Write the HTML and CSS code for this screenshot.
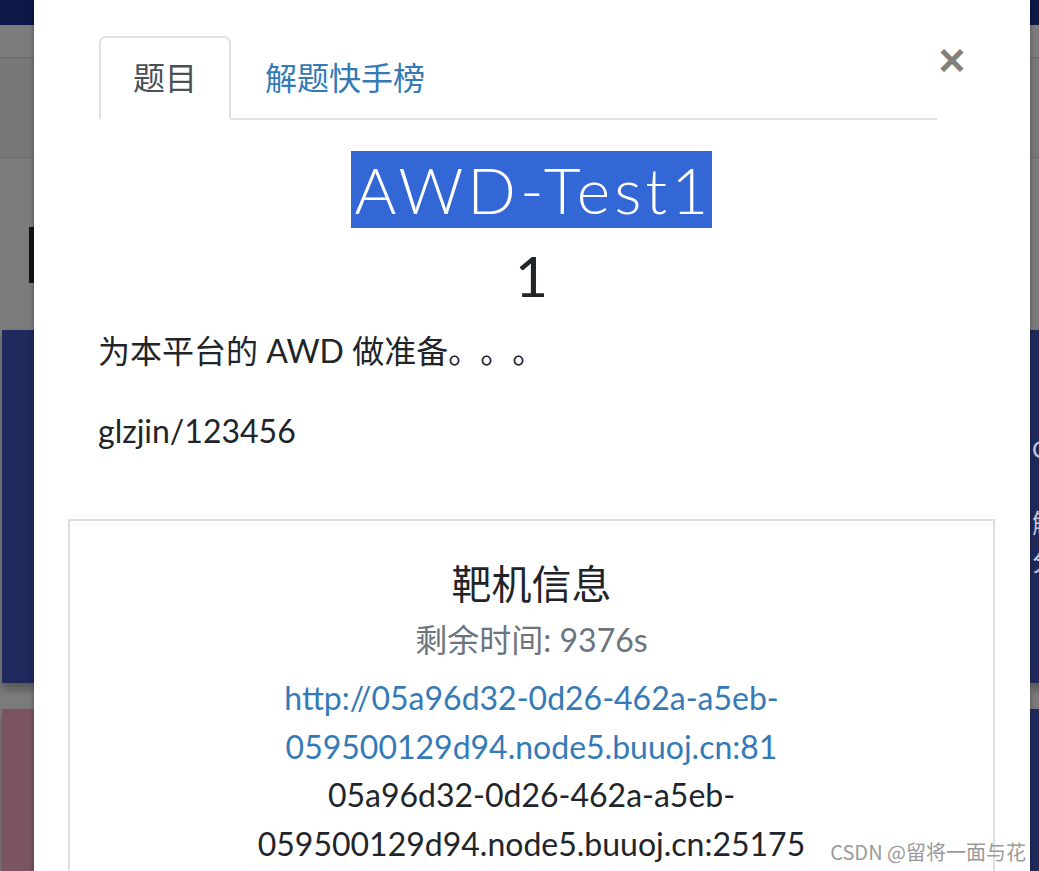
FILE: index.html
```html
<!DOCTYPE html>
<html lang="zh-CN">
<head>
<meta charset="utf-8">
<title>AWD-Test1</title>
<link rel="stylesheet" href="styles.css">
</head>
<body>
<div class="page">
  <div class="navbar"></div>
  <div class="subnav"></div>
  <div class="jumbo"></div>
  <div class="heading-area"><div class="heading-mark"></div></div>
  <div class="card-row">
    <div class="bg-card navy left"></div>
    <div class="bg-card navy right">
      <div class="bg-card-text t1">C</div>
      <div class="bg-card-text t2">解</div>
      <div class="bg-card-text t3">分</div>
    </div>
  </div>
  <div class="card-row second">
    <div class="bg-card maroon left"></div>
    <div class="bg-card navy right"></div>
  </div>

  <div class="modal">
    <div class="modal-top">
      <ul class="tabs">
        <li class="tab active">题目</li>
        <li class="tab"><a href="#">解题快手榜</a></li>
      </ul>
      <button class="close" type="button">×</button>
    </div>

    <div class="challenge">
      <h2 class="chal-name"><span class="sel">AWD-Test1</span></h2>
      <h3 class="chal-value">1</h3>
      <div class="chal-desc">
        <p>为本平台的 AWD 做准备。。。</p>
        <p>glzjin/123456</p>
      </div>

      <div class="info-card">
        <h4 class="info-title">靶机信息</h4>
        <div class="info-time">剩余时间: 9376s</div>
        <div class="info-lines">
          <a href="#">http://05a96d32-0d26-462a-a5eb-<br>059500129d94.node5.buuoj.cn:81</a><br>
          <span>05a96d32-0d26-462a-a5eb-<br>059500129d94.node5.buuoj.cn:25175</span>
        </div>
      </div>
    </div>
  </div>

  <div class="watermark">CSDN @留将一面与花</div>
</div>
</body>
</html>
```

FILE: styles.css
```css
html, body {
  margin: 0;
  padding: 0;
}
body {
  font-family: "Lato", "Noto Sans CJK SC", sans-serif;
  color: #212529;
  background: #7b7b7b;
  text-spacing-trim: space-all;
}
.page {
  position: relative;
  width: 1039px;
  height: 871px;
  overflow: hidden;
  background: #7b7b7b;
}
.navbar {
  height: 25px;
  background: #0c1846;
}
.subnav {
  height: 32px;
  background: #7c7c7c;
  border-bottom: 1px solid #6a6a6a;
}
.jumbo {
  height: 99px;
  background: #777777;
  border-bottom: 1px solid #6a6a6a;
}
.heading-area {
  height: 172px;
  padding-left: 29px;
  box-sizing: border-box;
  padding-top: 69px;
}
.heading-mark {
  width: 8px;
  height: 56px;
  background: #141414;
}
.card-row {
  display: flex;
  justify-content: space-between;
  height: 353px;
}
.card-row.second {
  margin-top: 26px;
  height: 200px;
}
.bg-card {
  width: 200px;
  box-shadow: 0 6px 8px rgba(0, 0, 0, 0.3);
}
.bg-card.left {
  margin-left: 2px;
}
.bg-card.right {
  margin-right: -191px;
  padding-left: 2px;
  box-sizing: border-box;
}
.navy {
  background: #1f295c;
}
.maroon {
  background: #7a5461;
}
.bg-card-text {
  color: #c4c8d6;
  font-size: 26px;
  line-height: 30px;
  font-family: "Lato", "Noto Sans CJK SC", sans-serif;
}
.bg-card-text.t1 {
  margin-top: 104px;
  font-size: 24px;
}
.bg-card-text.t2 {
  margin-top: 44px;
}
.bg-card-text.t3 {
  margin-top: 8px;
}

/* modal */
.modal {
  position: absolute;
  top: 0;
  left: 34px;
  width: 996px;
  height: 871px;
  background: #ffffff;
  box-shadow: 0 0 5px rgba(0, 0, 0, 0.35);
  padding: 36px 35px 0 34px;
  box-sizing: border-box;
}
.modal-top {
  display: flex;
  align-items: flex-start;
  padding-left: 31px;
}
.tabs {
  flex: 1;
  display: flex;
  list-style: none;
  margin: 0;
  padding: 0;
  border-bottom: 2px solid #dee2e6;
}
.tab {
  font-size: 32px;
  line-height: 48px;
  padding: 16px 32px;
  border: 2px solid transparent;
  border-top-left-radius: 7px;
  border-top-right-radius: 7px;
  margin-bottom: -2px;
}
.tab.active {
  color: #495057;
  border-color: #dee2e6 #dee2e6 #ffffff;
  background: #fff;
}
.tab a {
  color: #337ab7;
  text-decoration: none;
}
.close {
  width: 30px;
  margin: -1px 28px 0 0;
  padding: 0;
  border: 0;
  background: none;
  font-family: "Liberation Sans", "DejaVu Sans", sans-serif;
  font-size: 46px;
  font-weight: 700;
  line-height: 50px;
  color: #808080;
  cursor: pointer;
}

.challenge {
  text-align: center;
}
.chal-name {
  margin: 31px 0 0;
  font-size: 64px;
  font-weight: 300;
  line-height: 77px;
  letter-spacing: 4px;
}
.sel {
  display: inline-block;
  background: #3367d6;
  color: #ffffff;
  padding: 0 0 0 4px;
}
.chal-value {
  margin: 12px 0 0;
  font-size: 57px;
  font-weight: 400;
  line-height: 70px;
  color: #212529;
}
.chal-desc {
  text-align: left;
  padding-left: 30px;
  margin-top: 17px;
  font-size: 32px;
  line-height: 48px;
}
.chal-desc p {
  margin: 0 0 32px;
}
.info-card {
  margin-top: 64px;
  border: 2px solid #dfdfdf;
  padding-top: 39px;
  height: 400px;
}
.info-title {
  margin: 0 0 8px;
  font-size: 40px;
  font-weight: 400;
  line-height: 48px;
}
.info-time {
  font-size: 32px;
  line-height: 48px;
  color: #6c757d;
}
.info-lines {
  margin-top: 10px;
  font-size: 32px;
  line-height: 48.5px;
}
.info-lines a {
  color: #337ab7;
  text-decoration: none;
}
.watermark {
  position: absolute;
  right: 13px;
  bottom: 6px;
  font-family: "Noto Sans CJK SC", "Liberation Sans", sans-serif;
  font-size: 20px;
  line-height: 26px;
  color: #9a9a9a;
}
```
